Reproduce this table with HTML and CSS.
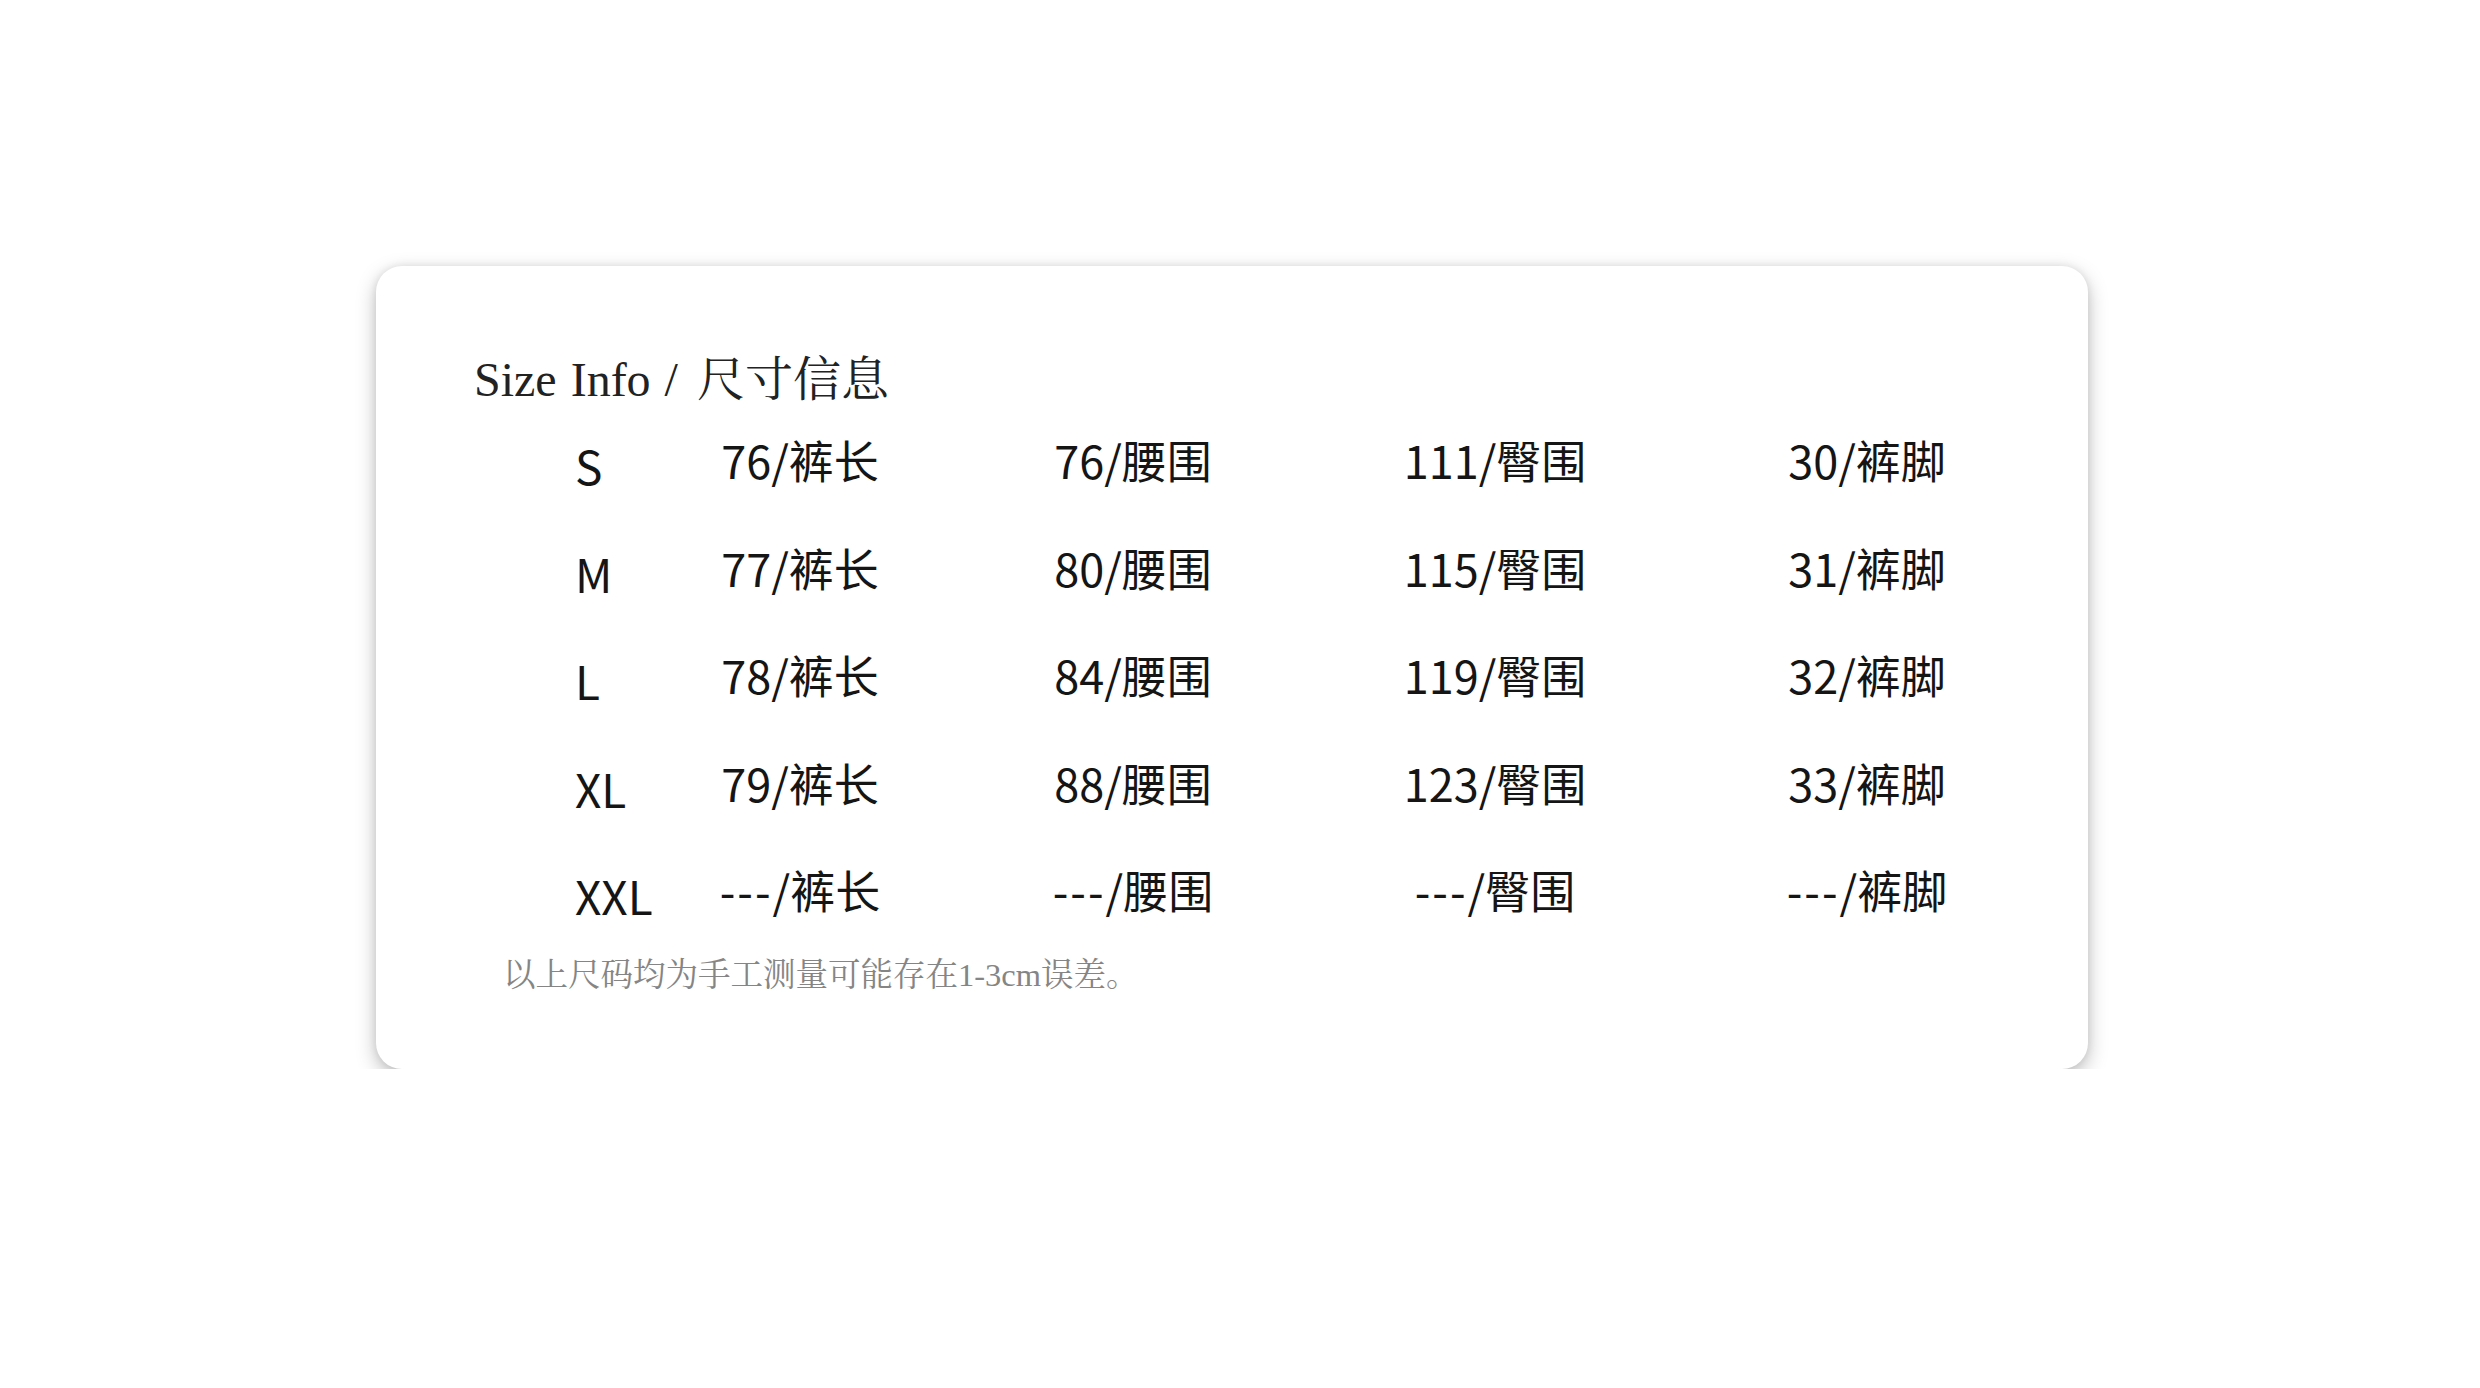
FILE: index.html
```html
<!DOCTYPE html>
<html lang="zh-CN">
<head>
<meta charset="utf-8">
<title>Size Info</title>
<link rel="stylesheet" href="styles.css">
</head>
<body>
<div class="card">
  <h1 class="title">Size Info / <span class="title-cn">尺寸信息</span></h1>
  <div class="table">
    <div class="size">S</div><div class="val">76/裤长</div><div class="val">76/腰围</div><div class="val">111/臀围</div><div class="val">30/裤脚</div>
    <div class="size">M</div><div class="val">77/裤长</div><div class="val">80/腰围</div><div class="val">115/臀围</div><div class="val">31/裤脚</div>
    <div class="size">L</div><div class="val">78/裤长</div><div class="val">84/腰围</div><div class="val">119/臀围</div><div class="val">32/裤脚</div>
    <div class="size">XL</div><div class="val">79/裤长</div><div class="val">88/腰围</div><div class="val">123/臀围</div><div class="val">33/裤脚</div>
    <div class="size">XXL</div><div class="val"><span class="dash">---</span>/裤长</div><div class="val"><span class="dash">---</span>/腰围</div><div class="val"><span class="dash">---</span>/臀围</div><div class="val"><span class="dash">---</span>/裤脚</div>
  </div>
  <p class="note">以上尺码均为手工测量可能存在1-3cm误差。</p>
</div>
</body>
</html>
```
FILE: styles.css
```css
html, body {
  margin: 0;
  background: #ffffff;
}

.card {
  box-sizing: border-box;
  margin: 266px 0 0 376px;
  width: 1712px;
  height: 803px;
  background: #ffffff;
  border-radius: 26px;
  box-shadow: 0 7px 20px rgba(0, 0, 0, 0.26), 0 0 8px rgba(0, 0, 0, 0.08);
  padding: 91px 0 0 98px;
}

.title {
  margin: 0;
  font-family: "Liberation Serif", "Noto Serif CJK SC", "Noto Sans CJK SC", serif;
  font-size: 48px;
  line-height: 46px;
  font-weight: 400;
  word-spacing: 2px;
  color: #222222;
  white-space: nowrap;
}

.title-cn {
  margin-left: 5px;
}

.table {
  display: grid;
  grid-template-columns: 100px 250px 416px 308px 436px;
  grid-auto-rows: 107.5px;
  align-items: center;
  margin: 3px 0 0 101px;
}

.val {
  text-align: center;
  font-family: "Noto Sans CJK SC", sans-serif;
  font-size: 45px;
  line-height: 45px;
  font-weight: 400;
  color: #151515;
  white-space: nowrap;
}

.dash {
  letter-spacing: 2px;
}

.size {
  font-family: "Noto Sans CJK SC", sans-serif;
  font-size: 46px;
  line-height: 45px;
  font-weight: 400;
  color: #151515;
  padding-top: 12px;
  white-space: nowrap;
}

.note {
  margin: 11px 0 0 29px;
  font-family: "Liberation Serif", "Noto Serif CJK SC", "Noto Sans CJK SC", serif;
  font-size: 32.5px;
  line-height: 40px;
  color: #858585;
  white-space: nowrap;
}
```
